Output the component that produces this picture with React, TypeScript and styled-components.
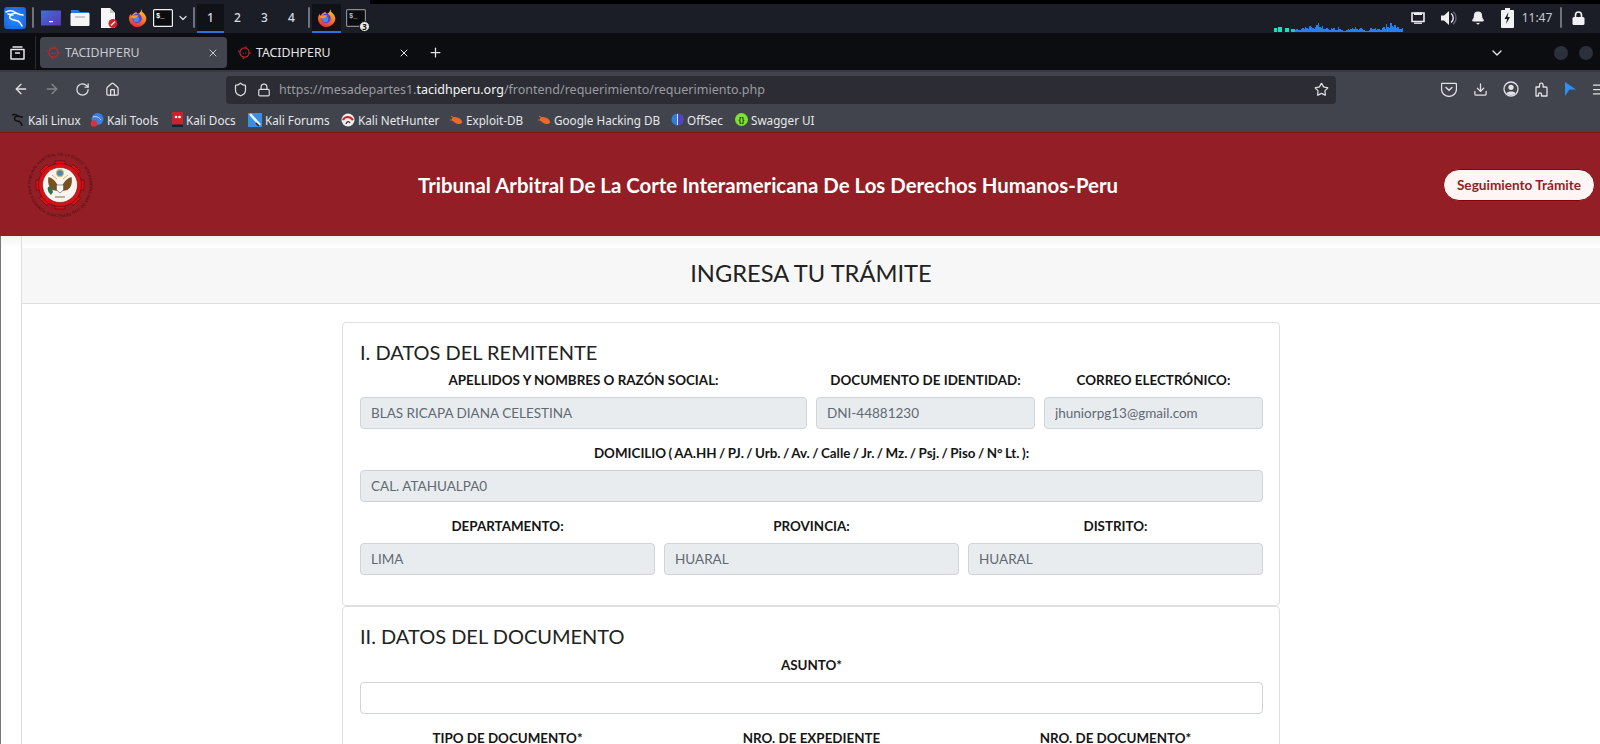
import React from 'react'
import styled, { createGlobalStyle } from 'styled-components'
import {
  ArrowLeft,
  ArrowRight,
  Bell,
  ChevronDown,
  Download,
  Home,
  Lock,
  Menu,
  Plus,
  RotateCw,
  Shield,
  Star,
  X,
} from 'lucide-react'

const GlobalStyle = createGlobalStyle`
    html, body {
        margin: 0;
        padding: 0;
        height: 100%;
        overflow: hidden;
        background: #fff;
    }
    * {
        box-sizing: border-box;
    }
`

const Screen = styled.div`
    width: 1600px;
    height: 744px;
    overflow: hidden;
    display: flex;
    flex-direction: column;
    font-family: "Noto Sans", sans-serif;
`

/* desktop panel */
const Panel = styled.div`
    height: 33px;
    flex: none;
    display: flex;
    justify-content: space-between;
    background: linear-gradient(#000 0 4px, #1b1e27 4px);
    color: #e6e8ee;
`

const PanelGroup = styled.div`
    display: flex;
    height: 33px;
    padding-top: 4px;
`

const PanelLeft = styled(PanelGroup)`
    background: #1b1e27;
`

const PanelRight = styled(PanelGroup)`
    padding-right: 14px;
`

const Slot = styled.div<{ $w: number; $active?: boolean }>`
    width: ${p => p.$w}px;
    flex: none;
    display: flex;
    align-items: center;
    justify-content: center;
    position: relative;
    background: ${p => (p.$active ? '#101218' : 'transparent')};
    border-bottom: 2px solid ${p => (p.$active ? '#2f6fe0' : 'transparent')};
`

const PanelSep = styled.div`
    width: 2px;
    height: 21px;
    background: #6f727a;
    border-radius: 1px;
`

const Workspace = styled(Slot)`
    font-size: 12px;
    color: #d8dbe2;
    font-weight: 500;
`

const Badge = styled.span`
    position: absolute;
    right: 0;
    bottom: -1px;
    width: 11px;
    height: 11px;
    border-radius: 50%;
    background: #e8e8e8;
    border: 1px solid #111;
    color: #111;
    font-size: 8px;
    font-weight: 700;
    line-height: 9px;
    text-align: center;
`

const Graph = styled.svg`
    display: block;
    align-self: flex-end;
`

const Clock = styled.span`
    font-size: 12px;
    color: #c7cbd3;
`

/* tab strip */
const TabStrip = styled.div`
    height: 37px;
    flex: none;
    display: flex;
    align-items: center;
    padding: 2px 7px 0 0;
    background: #0c0d11;
    color: #e4e4e7;
`

const TabsButton = styled.div`
    width: 36px;
    height: 33px;
    flex: none;
    display: flex;
    align-items: center;
    justify-content: center;
    border-right: 1px solid #2a2b31;
    margin-right: 4px;
`

const Tab = styled.div<{ $active?: boolean }>`
    width: 187px;
    height: 31px;
    flex: none;
    margin-right: ${p => (p.$active ? '4px' : '0')};
    display: flex;
    align-items: center;
    padding: 0 8px 0 7px;
    border-radius: 4px;
    font-size: 12.3px;
    background: ${p => (p.$active ? '#42444e' : 'transparent')};
    color: ${p => (p.$active ? '#c9cacf' : '#e4e4e7')};
`

const TabTitle = styled.span`
    flex: 1;
    margin-left: 5px;
`

const NewTab = styled.div`
    width: 34px;
    display: flex;
    justify-content: center;
`

const ListTabs = styled.div`
    margin-left: auto;
    display: flex;
    margin-right: 38px;
`

const Dot = styled.div`
    width: 14px;
    height: 14px;
    border-radius: 50%;
    background: #2c303b;
    margin-left: 11px;
`

/* toolbar */
const Toolbar = styled.div`
    height: 38px;
    flex: none;
    display: flex;
    align-items: center;
    padding-left: 6px;
    background: #42444d;
    border-top: 2px solid #38393f;
    overflow: hidden;
    color: #e1e2e6;
`

const UrlBar = styled.div`
    width: 1110px;
    height: 28px;
    flex: none;
    margin-left: 99px;
    margin-right: 98px;
    padding-left: 2px;
    padding-bottom: 1px;
    display: flex;
    align-items: center;
    background: #2c2d34;
    border-radius: 4px;
    font-size: 12.5px;
    color: #9a9ba1;
`

const UrlIcon = styled.div`
    width: 24px;
    flex: none;
    display: flex;
    justify-content: center;
`

const UrlText = styled.span`
    flex: 1;
    margin-left: 3px;

    b {
        font-weight: 400;
        color: #f4f4f5;
    }
`

const UrlStar = styled.div`
    padding-right: 7px;
    display: flex;
`

/* bookmarks */
const Bookmarks = styled.div`
    height: 24px;
    flex: none;
    display: flex;
    align-items: center;
    padding: 0 0 1px 11px;
    background: #42444d;
    color: #e6e7ea;
    font-size: 11.7px;
`

const Bookmark = styled.div<{ $w: number }>`
    width: ${p => p.$w}px;
    flex: none;
    display: flex;
    align-items: center;
    white-space: nowrap;

    svg {
        flex: none;
        margin-right: 3px;
    }
`

/* site header */
const Header = styled.header`
    height: 104px;
    flex: none;
    display: flex;
    align-items: center;
    padding: 0 5px 0 27px;
    background: #941e25;
    border-top: 1px solid #7e1219;
    font-family: Lato, sans-serif;
`

const HeaderTitle = styled.h1`
    flex: 1;
    margin: 0;
    text-align: center;
    color: #fff;
    font-size: 20.4px;
    font-weight: 700;
`

const FollowButton = styled.button`
    width: 152px;
    height: 32px;
    flex: none;
    border: 1px solid #8b0000;
    border-radius: 16px;
    background: #fff5f5;
    color: #941e25;
    font-family: Lato, sans-serif;
    font-size: 13.6px;
    font-weight: 700;
    padding: 0;
`

/* page */
const Page = styled.main`
    flex: 1;
    min-height: 0;
    overflow: hidden;
    display: flex;
    border-left: 1px solid #777;
    padding-left: 20px;
    font-family: Lato, sans-serif;
    color: #212529;
    background: linear-gradient(#f3f3f3, #fff 12px);
`

const Content = styled.div`
    flex: 1;
    border-left: 1px solid #ddd;
    padding-top: 12px;
`

const FormHeader = styled.div`
    height: 56px;
    padding-bottom: 5px;
    display: flex;
    align-items: center;
    justify-content: center;
    background: #f7f7f7;
    border-bottom: 1px solid #dfdfdf;
    font-size: 23.7px;
    color: #222;
`

const FormBody = styled.div`
    width: 938px;
    margin: 18px auto 0;
`

const Card = styled.section`
    border: 1px solid #dfdfdf;
    border-radius: 4px;
    padding: 17px 16px 30px 17px;
    background: #fff;
`

const CardTitle = styled.h2<{ $gap: number }>`
    margin: 0 0 ${p => p.$gap}px;
    font-size: 20px;
    line-height: 24px;
    font-weight: 400;
    color: #222;
`

const Row = styled.div<{ $cols: string }>`
    display: grid;
    grid-template-columns: ${p => p.$cols};
    column-gap: 9px;
    margin-bottom: 16px;

    &:last-child {
        margin-bottom: 0;
    }
`

const Field = styled.div`
    display: flex;
    flex-direction: column;
    min-width: 0;
`

const Label = styled.label`
    height: 16px;
    line-height: 16px;
    margin-bottom: 9px;
    text-align: center;
    font-size: 13.4px;
    font-weight: 700;
    color: #151515;
`

const AddressLabel = styled(Label)`
    word-spacing: -0.8px;
`

const Input = styled.input`
    width: 100%;
    height: 32px;
    padding: 0 10px;
    border: 1px solid #ced4da;
    border-radius: 4px;
    font-family: Lato, sans-serif;
    font-size: 13.5px;
    color: #5f6a73;
    background: ${p => (p.readOnly ? '#e9ecef' : '#fff')};
    outline: none;
`

/* drawn icons */
const KaliLogo = () => (
  <svg width="22" height="22" viewBox="0 0 22 22">
    <defs>
      <radialGradient id="kali" cx="0.5" cy="0.5" r="0.7">
        <stop offset="0" stopColor="#2f8cff" />
        <stop offset="1" stopColor="#1660d8" />
      </radialGradient>
    </defs>
    <rect width="22" height="22" rx="3" fill="url(#kali)" />
    <path d="M2 5c4-2 8-1 10 1 2 1 4 2 7 2M12 6c-4 0-7 2-6 5 1 2 5 2 8 3 2 1 3 3 4 5M9 8c-2 0-3-1-5-1" fill="none" stroke="#fff" strokeWidth="1.6" strokeLinecap="round" />
  </svg>
)

const DesktopIcon = () => (
  <svg width="20" height="16" viewBox="0 0 20 16">
    <defs>
      <linearGradient id="desk" x1="0" y1="0" x2="1" y2="1">
        <stop offset="0" stopColor="#3f72d8" />
        <stop offset="1" stopColor="#5a35b0" />
      </linearGradient>
    </defs>
    <rect width="20" height="15" y="0.5" fill="url(#desk)" />
    <rect x="8" y="11" width="4" height="1.2" fill="#fff" />
  </svg>
)

const FolderIcon = () => (
  <svg width="20" height="17" viewBox="0 0 20 17">
    <path d="M1 1h7l2 2h9v4H1z" fill="#2878e0" />
    <rect x="0.5" y="4" width="19" height="13" rx="1" fill="#f4f4f4" />
    <rect x="5" y="7" width="10" height="2" fill="#c9c9c9" />
  </svg>
)

const DocIcon = () => (
  <svg width="18" height="20" viewBox="0 0 18 20">
    <path d="M1 0h9l5 5v15H1z" fill="#f5f5f5" />
    <path d="M10 0l5 5h-5z" fill="#c8c8c8" />
    <circle cx="13" cy="15.5" r="4.5" fill="#d81e28" />
    <path d="M11 17.5l4-4" stroke="#fff" strokeWidth="1.5" />
  </svg>
)

const FirefoxIcon = ({ size = 19 }: { size?: number }) => (
  <svg width={size} height={size} viewBox="0 0 20 20">
    <defs>
      <linearGradient id="fox" x1="0.7" y1="0" x2="0.3" y2="1">
        <stop offset="0" stopColor="#ffc92e" />
        <stop offset="0.5" stopColor="#ff7a22" />
        <stop offset="1" stopColor="#e8283c" />
      </linearGradient>
    </defs>
    <path d="M14 1c1 2 0 3 2 4 3 3 4 6 3 8-1 4-5 7-9 7-5 0-9-4-9-9 0-2 1-4 2-5 0 1 0 2 1 2 1-2 3-3 5-4 0 1 0 2 2 2 2-1 3-3 3-5z" fill="url(#fox)" />
    <circle cx="9.5" cy="11" r="5" fill="#5b3dd6" />
    <circle cx="8.8" cy="11.8" r="3.1" fill="#3f8cf0" />
    <path d="M3 9c2-1 5-2 8-1l-2 2-4 1z" fill="#ff9a26" />
  </svg>
)

const TerminalIcon = ({ dim }: { dim?: boolean }) => (
  <svg width="20" height="18" viewBox="0 0 20 18">
    <rect x="0.6" y="0.6" width="18.8" height="16.8" rx="1" fill="#0b0c0f" stroke={dim ? '#8a8c92' : '#f0f0f0'} strokeWidth="1.2" />
    <text x="3" y="8.5" fontSize="7" fontWeight="700" fill={dim ? '#b8bac0' : '#fff'} fontFamily="Liberation Mono, monospace">$_</text>
  </svg>
)

const DisplayIcon = () => (
  <svg width="14" height="12" viewBox="0 0 14 12">
    <path d="M1 1h12v8.5H1z" fill="none" stroke="#eceef2" strokeWidth="1.6" />
    <rect x="3" y="0.5" width="8" height="2.5" fill="#eceef2" />
    <path d="M3 11.2h8" stroke="#eceef2" strokeWidth="1.3" />
  </svg>
)

const SpeakerIcon = () => (
  <svg width="16" height="14" viewBox="0 0 16 14">
    <path d="M0 4.5h3L8 0v14L3 9.5H0z" fill="#eceef2" />
    <path d="M10 2.5c3 2 3 7 0 9" fill="none" stroke="#eceef2" strokeWidth="1.4" />
    <path d="M12 0.8c4 3 4 9.4 0 12.4" fill="none" stroke="#62656d" strokeWidth="1.3" />
  </svg>
)

const BatteryIcon = () => (
  <svg width="13" height="20" viewBox="0 0 13 20">
    <path d="M4 0h5v2h3a1 1 0 0 1 1 1v16a1 1 0 0 1-1 1H1a1 1 0 0 1-1-1V3a1 1 0 0 1 1-1h3z" fill="#f1f2f4" />
    <path d="M7.5 4L3.5 11h2.5l-1 5 4-7H6.5z" fill="#14161c" />
  </svg>
)

const LockIcon = () => (
  <svg width="13" height="14" viewBox="0 0 13 14">
    <path d="M3.5 6V4a3 3 0 0 1 6 0v2" fill="none" stroke="#f1f2f4" strokeWidth="1.6" />
    <rect x="0.5" y="6" width="12" height="8" rx="1.5" fill="#f1f2f4" />
  </svg>
)

const TabsIcon = () => (
  <svg width="15" height="14" viewBox="0 0 15 14">
    <path d="M2.5 1h10M1 3.5h13v9.5H1z" fill="none" stroke="#e8e8ea" strokeWidth="1.5" strokeLinejoin="round" />
    <path d="M5 7h5" stroke="#e8e8ea" strokeWidth="1.5" />
  </svg>
)

const TabFavicon = () => (
  <svg width="13" height="13" viewBox="0 0 13 13">
    <circle cx="6.5" cy="6.5" r="4.6" fill="none" stroke="#c4262c" strokeWidth="1.2" />
    <circle cx="6.5" cy="6.5" r="5.8" fill="none" stroke="#c4262c" strokeWidth="1.2" strokeDasharray="1.5 7.6" />
    <path d="M4.8 7.2h.8M7.4 7.2h.8" stroke="#777" strokeWidth="1" />
  </svg>
)

const PocketIcon = () => (
  <svg width="16" height="15" viewBox="0 0 16 15">
    <path d="M1.5 1h13a1 1 0 0 1 1 1v4.5a7.5 7.5 0 0 1-15 0V2a1 1 0 0 1 .5-1z" transform="translate(0 .4)" fill="none" stroke="#e1e2e6" strokeWidth="1.3" />
    <path d="M5 5.500l3 2.800 3-2.800" fill="none" stroke="#e1e2e6" strokeWidth="1.4" strokeLinecap="round" />
  </svg>
)

const AccountIcon = () => (
  <svg width="16" height="16" viewBox="0 0 16 16">
    <circle cx="8" cy="8" r="7" fill="none" stroke="#e1e2e6" strokeWidth="1.3" />
    <circle cx="8" cy="6.3" r="2.6" fill="#e1e2e6" />
    <path d="M3.5 12.4c1-2.4 8-2.4 9 0-2 2-7 2-9 0z" fill="#e1e2e6" />
  </svg>
)

const ExtensionIcon = () => (
  <svg width="15" height="15" viewBox="0 0 15 15">
    <path d="M1 5h3.500V3a1.800 1.800 0 0 1 3.600 0v2H11a1 1 0 0 1 1 1v8H6.500v-2a1.600 1.600 0 0 0-3 0v2H1z" transform="translate(1 0)" fill="none" stroke="#e1e2e6" strokeWidth="1.3" strokeLinejoin="round" />
  </svg>
)

const BlueArrow = () => (
  <svg width="11" height="14" viewBox="0 0 11 14">
    <path d="M0 0l11 7.500H4.500L0 14z" fill="#2f8ff0" />
  </svg>
)

const DragonMark = () => (
  <svg width="14" height="14" viewBox="0 0 14 14">
    <path d="M1 2c3-1 5 0 6 1 2 1 3 1 5 1M7 3C4 3 3 5 4 7c1 1 3 1 5 2 1 1 2 3 2 4" fill="none" stroke="#111" strokeWidth="1.5" />
  </svg>
)

const ToolsMark = () => (
  <svg width="14" height="14" viewBox="0 0 14 14">
    <circle cx="7.5" cy="6" r="6" fill="#3a7fe0" />
    <path d="M3 4c3-1 6 0 8 3" stroke="#cfe0ff" strokeWidth="1" fill="none" />
    <circle cx="4" cy="10.5" r="3.2" fill="#d8323a" />
  </svg>
)

const DocsMark = () => (
  <svg width="11" height="15" viewBox="0 0 11 15">
    <rect width="11" height="15" rx="1" fill="#c9242b" />
    <rect y="12.5" width="11" height="2.5" fill="#123" />
    <circle cx="4" cy="5" r="1.3" fill="#fff" />
    <circle cx="7.5" cy="5" r="1.3" fill="#fff" />
  </svg>
)

const ForumsMark = () => (
  <svg width="14" height="14" viewBox="0 0 14 14">
    <rect width="14" height="14" fill="#3a8fe0" />
    <path d="M2 1l10 11" stroke="#f1f1f1" strokeWidth="2.5" />
    <path d="M8 10l3 3" stroke="#222" strokeWidth="1.5" />
  </svg>
)

const HunterMark = () => (
  <svg width="14" height="14" viewBox="0 0 14 14">
    <circle cx="7" cy="7" r="6.5" fill="#eee" />
    <path d="M2 7c2-4 7-4 10 0" stroke="#d0242c" strokeWidth="2.2" fill="none" />
    <path d="M5 11c1-3 3-3 4-1" stroke="#333" strokeWidth="1.3" fill="none" />
  </svg>
)

const BugMark = () => (
  <svg width="13" height="12" viewBox="0 0 13 12">
    <ellipse cx="7" cy="6.5" rx="5.5" ry="3" transform="rotate(25 7 6.5)" fill="#e9682a" />
    <path d="M1 2l3 2M0 6l3 0" stroke="#e9682a" strokeWidth="1" />
  </svg>
)

const OffSecMark = () => (
  <svg width="13" height="13" viewBox="0 0 13 13">
    <circle cx="6.5" cy="6.5" r="6" fill="#2d7fd6" />
    <path d="M6.5.5a6 6 0 0 1 0 12z" fill="#5a3fc0" />
    <path d="M6.5 1v11" stroke="#cfe4f7" strokeWidth="1" />
  </svg>
)

const SwaggerMark = () => (
  <svg width="13" height="13" viewBox="0 0 13 13">
    <circle cx="6.5" cy="6.5" r="6.5" fill="#7ee12a" />
    <text x="6.5" y="9.2" textAnchor="middle" fontSize="7.5" fontWeight="700" fill="#173b12" fontFamily="Liberation Sans, sans-serif">{'{}'}</text>
  </svg>
)

// gear seal of the tribunal, the lettering runs round the ring
const Seal = () => (
  <svg width="66" height="66" viewBox="0 0 66 66">
    <defs>
      <path id="ring" d="M33 33m-29.5 0a29.5 29.5 0 1 1 59 0a29.5 29.5 0 1 1-59 0" />
    </defs>
    <text fontSize="3.9" fill="#3a1014" fontFamily="Liberation Sans, sans-serif" letterSpacing=".2">
      <textPath href="#ring">TRIBUNAL ARBITRAL DE LA CORTE INTERAMERICANA DE LOS DERECHOS HUMANOS PERU</textPath>
    </text>
    <g fill="#dc0f14" stroke="#3a0a0c" strokeWidth=".5">
      {[0, 45, 90, 135, 180, 225, 270, 315].map(a => (
        <rect key={a} x="28" y="9" width="10" height="6" transform={`rotate(${a} 33 33)`} />
      ))}
      <circle cx="33" cy="33" r="21.5" />
    </g>
    <circle cx="33" cy="33" r="17.5" fill="#f6f4ec" stroke="#2a0d10" strokeWidth=".5" />
    <circle cx="33" cy="21" r="3.4" fill="#4d86b8" stroke="#d6b45a" strokeWidth="1.1" />
    <path d="M30 27l-5-4M36 27l5-4" stroke="#d8bc5a" strokeWidth="1" />
    <path d="M31 34C28 28 25 26 21.5 25c-1 5 0 10 4 13l5 1z" fill="#7a4f24" />
    <path d="M35 34c3-6 6-8 9.5-9 1 5 0 10-4 13l-5 1z" fill="#7a4f24" />
    <path d="M29.5 33h7v5l-3.5 3-3.5-3z" fill="#f7f7f7" stroke="#555" strokeWidth=".6" />
    <path d="M21 35c-1 3 1 6 3 8l2-3-2-6z" fill="#2f6f4a" />
    <path d="M28 45h10" stroke="#b9b0a0" strokeWidth="2" />
  </svg>
)

const GRAPH = [
  2, 3, 2, 2, 3, 4, 3, 5, 4, 3, 6, 5, 4, 3, 5, 7, 9, 5, 4, 6, 3, 3, 4, 3, 2, 4, 3, 4, 2, 2, 5, 3, 2, 2, 1, 1, 2, 3, 2, 3, 4, 3, 5, 3, 2, 3, 4, 3, 2, 1, 1, 1, 2,
  4, 3, 3, 4, 2, 3, 3, 2, 4, 5, 3, 8, 5, 4, 9, 6, 5, 7, 4, 5, 3, 3, 4,
]

const NetGraph = () => (
  <Graph width="129" height="10" viewBox="0 0 129 10" shapeRendering="crispEdges">
    <rect x="0" y="5" width="3" height="4" fill="#0ee6c0" />
    <rect x="4" y="4" width="4" height="5" fill="#0ee6c0" />
    <rect x="11" y="5" width="4" height="4" fill="#0ee6c0" />
    <rect x="17" y="6" width="4" height="3" fill="#12c8d8" />
    <rect x="28" y="8" width="101" height="1" fill="#2480f4" />
    {GRAPH.map((h, i) => (
      <rect key={i} x={21 + i * 1.42} y={9 - h} width="1.5" height={h} fill="#2480f4" />
    ))}
  </Graph>
)

const BOOKMARKS = [
  { name: 'Kali Linux', width: 79, icon: <DragonMark /> },
  { name: 'Kali Tools', width: 82, icon: <ToolsMark /> },
  { name: 'Kali Docs', width: 76, icon: <DocsMark /> },
  { name: 'Kali Forums', width: 93, icon: <ForumsMark /> },
  { name: 'Kali NetHunter', width: 109, icon: <HunterMark /> },
  { name: 'Exploit-DB', width: 88, icon: <BugMark /> },
  { name: 'Google Hacking DB', width: 133, icon: <BugMark /> },
  { name: 'OffSec', width: 64, icon: <OffSecMark /> },
  { name: 'Swagger UI', width: 90, icon: <SwaggerMark /> },
]

const App = () => {
  return (
    <Screen>
      <GlobalStyle />
      <Panel>
        <PanelLeft>
          <Slot $w={30}><KaliLogo /></Slot>
          <Slot $w={6}><PanelSep /></Slot>
          <Slot $w={29}><DesktopIcon /></Slot>
          <Slot $w={29}><FolderIcon /></Slot>
          <Slot $w={30}><DocIcon /></Slot>
          <Slot $w={26}><FirefoxIcon /></Slot>
          <Slot $w={25}><TerminalIcon /></Slot>
          <Slot $w={15}><ChevronDown size={12} strokeWidth={2.5} color="#d8dbe2" /></Slot>
          <Slot $w={7}><PanelSep /></Slot>
          <Workspace $w={27} $active>1</Workspace>
          <Workspace $w={27}>2</Workspace>
          <Workspace $w={27}>3</Workspace>
          <Workspace $w={27}>4</Workspace>
          <Slot $w={7}><PanelSep /></Slot>
          <Slot $w={29} $active><FirefoxIcon /></Slot>
          <Slot $w={29}>
            <TerminalIcon dim />
            <Badge>3</Badge>
          </Slot>
        </PanelLeft>
        <PanelRight>
          <NetGraph />
          <Slot $w={30}><DisplayIcon /></Slot>
          <Slot $w={31}><SpeakerIcon /></Slot>
          <Slot $w={28}><Bell size={14} fill="#eceef2" color="#eceef2" /></Slot>
          <Slot $w={30}><BatteryIcon /></Slot>
          <Slot $w={30}><Clock>11:47</Clock></Slot>
          <Slot $w={18}><PanelSep /></Slot>
          <Slot $w={16}><LockIcon /></Slot>
        </PanelRight>
      </Panel>

      <TabStrip>
        <TabsButton><TabsIcon /></TabsButton>
        <Tab $active>
          <TabFavicon />
          <TabTitle>TACIDHPERU</TabTitle>
          <X size={12} />
        </Tab>
        <Tab>
          <TabFavicon />
          <TabTitle>TACIDHPERU</TabTitle>
          <X size={12} />
        </Tab>
        <NewTab><Plus size={15} /></NewTab>
        <ListTabs><ChevronDown size={16} /></ListTabs>
        <Dot />
        <Dot />
      </TabStrip>

      <Toolbar>
        <Slot $w={30}><ArrowLeft size={16} /></Slot>
        <Slot $w={31}><ArrowRight size={16} color="#85868c" /></Slot>
        <Slot $w={30}><RotateCw size={15} /></Slot>
        <Slot $w={30}><Home size={15} /></Slot>
        <UrlBar>
          <UrlIcon><Shield size={15} color="#dcdde0" /></UrlIcon>
          <UrlIcon><Lock size={14} color="#dcdde0" /></UrlIcon>
          <UrlText>
            https://mesadepartes1.<b>tacidhperu.org</b>/frontend/requerimiento/requerimiento.php
          </UrlText>
          <UrlStar><Star size={15} color="#dcdde0" /></UrlStar>
        </UrlBar>
        <Slot $w={30}><PocketIcon /></Slot>
        <Slot $w={32}><Download size={15} /></Slot>
        <Slot $w={30}><AccountIcon /></Slot>
        <Slot $w={30}><ExtensionIcon /></Slot>
        <Slot $w={28}><BlueArrow /></Slot>
        <Slot $w={28}><Menu size={15} /></Slot>
      </Toolbar>

      <Bookmarks>
        {BOOKMARKS.map(b => (
          <Bookmark key={b.name} $w={b.width}>
            {b.icon}
            {b.name}
          </Bookmark>
        ))}
      </Bookmarks>

      <Header>
        <Seal />
        <HeaderTitle>Tribunal Arbitral De La Corte Interamericana De Los Derechos Humanos-Peru</HeaderTitle>
        <FollowButton>Seguimiento Trámite</FollowButton>
      </Header>

      <Page>
        <Content>
          <FormHeader>INGRESA TU TRÁMITE</FormHeader>
          <FormBody>
            <Card>
              <CardTitle $gap={8}>I. DATOS DEL REMITENTE</CardTitle>
              <Row $cols="447px 219px 219px">
                <Field>
                  <Label>APELLIDOS Y NOMBRES O RAZÓN SOCIAL:</Label>
                  <Input readOnly value="BLAS RICAPA DIANA CELESTINA" />
                </Field>
                <Field>
                  <Label>DOCUMENTO DE IDENTIDAD:</Label>
                  <Input readOnly value="DNI-44881230" />
                </Field>
                <Field>
                  <Label>CORREO ELECTRÓNICO:</Label>
                  <Input readOnly value="jhuniorpg13@gmail.com" />
                </Field>
              </Row>
              <Row $cols="1fr">
                <Field>
                  <AddressLabel>DOMICILIO ( AA.HH / PJ. / Urb. / Av. / Calle / Jr. / Mz. / Psj. / Piso / N° Lt. ):</AddressLabel>
                  <Input readOnly value="CAL. ATAHUALPA0" />
                </Field>
              </Row>
              <Row $cols="1fr 1fr 1fr">
                <Field>
                  <Label>DEPARTAMENTO:</Label>
                  <Input readOnly value="LIMA" />
                </Field>
                <Field>
                  <Label>PROVINCIA:</Label>
                  <Input readOnly value="HUARAL" />
                </Field>
                <Field>
                  <Label>DISTRITO:</Label>
                  <Input readOnly value="HUARAL" />
                </Field>
              </Row>
            </Card>
            <Card>
              <CardTitle $gap={9}>II. DATOS DEL DOCUMENTO</CardTitle>
              <Row $cols="1fr">
                <Field>
                  <Label>ASUNTO*</Label>
                  <Input />
                </Field>
              </Row>
              <Row $cols="1fr 1fr 1fr">
                <Field>
                  <Label>TIPO DE DOCUMENTO*</Label>
                </Field>
                <Field>
                  <Label>NRO. DE EXPEDIENTE</Label>
                </Field>
                <Field>
                  <Label>NRO. DE DOCUMENTO*</Label>
                </Field>
              </Row>
            </Card>
          </FormBody>
        </Content>
      </Page>
    </Screen>
  )
}

export default App
